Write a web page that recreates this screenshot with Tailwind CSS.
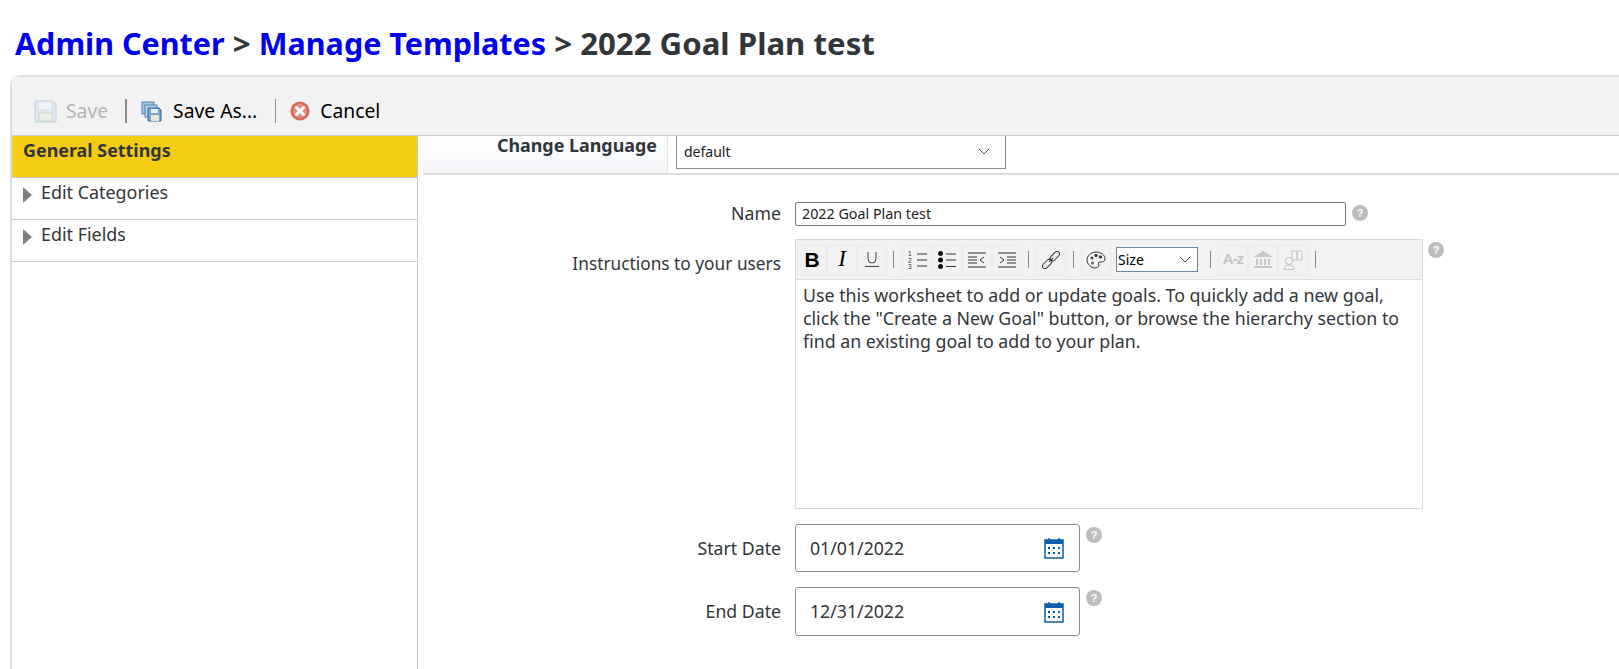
<!DOCTYPE html>
<html lang="en">
  <head>
    <meta charset="UTF-8" />
    <title>2022 Goal Plan test</title>
    <script src="https://cdn.jsdelivr.net/npm/@tailwindcss/browser@4"></script>
  </head>

  <body class="h-[669px] w-[1619px] overflow-hidden bg-white font-['Noto_Sans',sans-serif] text-[#32363a]">
    <!-- breadcrumb -->
    <h1 class="h-[75px] pl-[15px] pt-[21px] text-[31.2px] leading-[44px] font-bold whitespace-nowrap">
      <a class="text-[#0000ee] text-[30.5px]">Admin Center</a> &gt;
      <a class="text-[#0000ee] text-[30.5px]">Manage Templates</a> &gt; 2022 Goal Plan test
    </h1>

    <div class="ml-[10px] h-[594px] rounded-tl-[10px] border-t-2 border-l-2 border-[#dedede] flex flex-col">
      <!-- toolbar -->
      <div class="h-[59px] shrink-0 bg-[#f2f2f2] border-b border-[#cccccc] flex items-center pl-[22px] pt-[10px] text-[19.3px] text-black">
        <svg width="23" height="23" viewBox="0 0 23 23" class="opacity-35">
          <path d="M1 1h18l3 3v18H1z" fill="#b7cfe8" stroke="#6f97c4" />
          <rect x="5" y="2" width="12" height="7" fill="#eef4fa" />
          <rect x="5" y="13" width="13" height="8" fill="#dfe8c8" stroke="#8aa" />
        </svg>
        <span class="ml-[9px] text-[#b5b5b5]">Save</span>
        <span class="ml-[17px] h-6 w-0.5 bg-[#8c8c8c]"></span>
        <svg width="21" height="21" viewBox="0 0 21 21" class="ml-[14px]">
          <rect x="1" y="1" width="12" height="12" fill="#a9c4e4" stroke="#4f7fb5" />
          <rect x="4" y="4" width="12" height="12" fill="#bcd2ea" stroke="#4f7fb5" />
          <path d="M7 7h11l2 2v11H7z" fill="#7fa6d2" stroke="#2f659f" />
          <rect x="10" y="14" width="8" height="6" fill="#e6e6d8" />
          <rect x="10" y="8" width="7" height="4" fill="#e8f0f8" />
        </svg>
        <span class="ml-[11px]">Save As...</span>
        <span class="ml-[18px] h-6 w-px bg-[#8c8c8c]"></span>
        <svg width="20" height="20" viewBox="0 0 20 20" class="ml-[14px]">
          <circle cx="10" cy="10" r="9.5" fill="#d9695c" />
          <circle cx="10" cy="10" r="7" fill="#e58b7f" />
          <path d="M6.5 6.5l7 7M13.5 6.5l-7 7" stroke="#fff" stroke-width="3" stroke-linecap="round" />
        </svg>
        <span class="ml-[10px]">Cancel</span>
      </div>

      <div class="flex-1 flex min-h-0">
        <!-- left nav -->
        <aside class="w-[406px] shrink-0 border-r border-[#c8c8c8] text-[17.9px]">
          <div class="h-[42px] bg-[#f4cc14] border-b border-[#cccccc] pl-[11px] pt-[2px] font-bold leading-[24px]">General Settings</div>
          <div class="h-[42px] border-b border-[#cccccc] pl-[11px] pt-[2px] leading-[24px] flex gap-[9px]">
            <svg width="9" height="16" viewBox="0 0 9 16" class="mt-[7px]"><path d="M0 0l9 8-9 8z" fill="#808080" /></svg>
            Edit Categories
          </div>
          <div class="h-[42px] border-b border-[#cccccc] pl-[11px] pt-[2px] leading-[24px] flex gap-[9px]">
            <svg width="9" height="16" viewBox="0 0 9 16" class="mt-[7px]"><path d="M0 0l9 8-9 8z" fill="#808080" /></svg>
            Edit Fields
          </div>
        </aside>

        <main class="flex-1 pl-[5px] min-w-0">
          <!-- language row -->
          <div class="h-[39px] border-b-2 border-[#dcdcdc] flex">
            <div class="w-[245px] h-full pr-[10px] text-right text-[17.9px] font-bold leading-[18px] bg-gradient-to-b from-white to-[#f2f5f8] border-r border-[#e4e4e4]">Change Language</div>
            <div class="ml-[8px] w-[330px] h-[33px] bg-white border border-t-0 border-[#89919a] flex items-center justify-between pl-[7px] pr-[15px] pb-[2px] text-[14px] text-[#222]">
              default
              <svg width="12" height="7" viewBox="0 0 12 7"><path d="M1 1l5 5 5-5" fill="none" stroke="#444" /></svg>
            </div>
          </div>

          <!-- form -->
          <div class="grid grid-cols-[358px_auto] gap-x-[14px] pt-[27px] text-[17.7px] items-start">
            <label class="text-right leading-[22px]">Name</label>
            <div class="flex items-start gap-[6px]">
              <div class="w-[551px] h-[24px] border border-[#777] rounded-[2px] pl-[6px] text-[14.3px] leading-[22px] text-[#222]">2022 Goal Plan test</div>
              <svg width="16" height="16" viewBox="0 0 16 16" class="mt-[3px]"><circle cx="8" cy="8" r="8" fill="#bdbdbd" /><text x="8" y="12" text-anchor="middle" font-size="11" font-weight="700" fill="#fff" font-family="Liberation Sans">?</text></svg>
            </div>

            <label class="mt-[13px] pt-[13px] text-right leading-[24px] text-[17.3px]">Instructions to your users</label>
            <div class="mt-[13px] flex items-start gap-[5px]">
              <div class="w-[628px] h-[270px] border border-[#d9d9d9]">
                <div class="h-[40px] bg-[#f2f2f2] border-b border-[#dedede] flex items-center pl-[1px] text-[#222]">
                  <span class="size-[30px] border border-[#ebebeb] flex items-center justify-center text-[21px] font-bold font-['Liberation_Sans',sans-serif] text-black">B</span>
                  <span class="size-[30px] border border-[#ebebeb] flex items-center justify-center text-[23px] italic font-['Liberation_Serif',serif] text-black">I</span>
                  <span class="size-[30px] border border-[#ebebeb] flex items-center justify-center">
                    <svg width="16" height="18" viewBox="0 0 16 18" fill="none" stroke="#444"><path d="M4 1v7a4 4 0 0 0 8 0V1M1 15.5h14" /></svg>
                  </span>
                  <span class="ml-[6px] mr-[8px] h-[17px] w-px bg-[#888]"></span>
                  <span class="size-[30px] border border-[#ebebeb] flex items-center justify-center">
                    <svg width="19" height="20" viewBox="0 0 19 20"><path d="M9 4h10M9 10h10M9 16h10" stroke="#333" /><text x="0" y="6" font-size="6.500" fill="#333" font-family="Liberation Sans">1</text><text x="0" y="12.500" font-size="6.500" fill="#333" font-family="Liberation Sans">2</text><text x="0" y="19" font-size="6.500" fill="#333" font-family="Liberation Sans">3</text></svg>
                  </span>
                  <span class="size-[30px] border border-[#ebebeb] flex items-center justify-center">
                    <svg width="18" height="18" viewBox="0 0 18 18"><circle cx="2.5" cy="2.5" r="2.5" fill="#111" /><circle cx="2.5" cy="9" r="2.5" fill="#111" /><circle cx="2.5" cy="15.500" r="2.500" fill="#111" /><path d="M8 3h10M8 9h10M8 15.500h10" stroke="#333" /></svg>
                  </span>
                  <span class="size-[30px] border border-[#ebebeb] flex items-center justify-center">
                    <svg width="18" height="16" viewBox="0 0 18 16" fill="none" stroke="#333"><path d="M0 1h18M0 15h18M0 5h9M0 8h9M0 11h9M16 5l-4 3 4 3" /></svg>
                  </span>
                  <span class="size-[30px] border border-[#ebebeb] flex items-center justify-center">
                    <svg width="18" height="16" viewBox="0 0 18 16" fill="none" stroke="#333"><path d="M0 1h18M0 15h18M9 5h9M9 8h9M9 11h9M2 5l4 3-4 3" /></svg>
                  </span>
                  <span class="ml-[6px] mr-[7px] h-[17px] w-px bg-[#888]"></span>
                  <span class="size-[30px] border border-[#ebebeb] flex items-center justify-center">
                    <svg width="18" height="18" viewBox="0 0 18 18" fill="none" stroke="#333"><g transform="rotate(45 9 9)"><rect x="6.500" y="-2" width="5" height="11" rx="2.500" /><rect x="6.500" y="9" width="5" height="11" rx="2.500" /><path d="M9 6v6" /></g></svg>
                  </span>
                  <span class="mx-[7px] h-[17px] w-px bg-[#888]"></span>
                  <span class="size-[30px] border border-[#ebebeb] flex items-center justify-center">
                    <svg width="20" height="18" viewBox="0 0 20 18" fill="none" stroke="#333"><path d="M10 1c5 0 9 3 9 7 0 3-3 3-5 3-2 0-2 2-1 3 0 2-2 3-4 3-4 0-8-4-8-8s4-8 9-8z" /><circle cx="6" cy="7" r="1" fill="#333" /><circle cx="10" cy="4.500" r="1.200" fill="#333" /><circle cx="14.500" cy="6" r="1.200" fill="#333" /><circle cx="6.500" cy="12" r="1" /></svg>
                  </span>
                  <span class="ml-[5px] w-[82px] h-[25px] bg-white border border-[#6f87a0] flex items-center justify-between pl-[1px] pr-[6px] text-[14px] text-black">
                    Size
                    <svg width="12" height="7" viewBox="0 0 12 7"><path d="M1 1l5 5 5-5" fill="none" stroke="#444" /></svg>
                  </span>
                  <span class="mx-[12px] h-[17px] w-px bg-[#888]"></span>
                  <span class="-ml-[5px] size-[30px] border border-[#ebebeb] flex items-center justify-center text-[15px] tracking-[-1px] font-bold font-['Liberation_Sans',sans-serif] text-[#c4c4c4]">A-z</span>
                  <span class="size-[30px] border border-[#ebebeb] flex items-center justify-center">
                    <svg width="20" height="18" viewBox="0 0 20 18" fill="#c8c8c8"><path d="M10 0l10 6H0z" /><path d="M3 8h2v6H3zM7 8h2v6H7zM11 8h2v6h-2zM15 8h2v6h-2zM1 15h18v2H1z" /></svg>
                  </span>
                  <span class="size-[30px] border border-[#ebebeb] flex items-center justify-center">
                    <svg width="20" height="20" viewBox="0 0 20 20" fill="none" stroke="#c4c4c4"><circle cx="6" cy="11" r="3.500" /><path d="M1 19.500c0-6 10-6 10 0zM9 1h5v9H9zM14 1h5v9h-5z" /></svg>
                  </span>
                  <span class="ml-[7px] h-[17px] w-px bg-[#888]"></span>
                </div>
                <p class="px-[7px] pt-[4px] text-[17.8px] leading-[23px]">Use this worksheet to add or update goals. To quickly add a new goal, click the "Create a New Goal" button, or browse the hierarchy section to find an existing goal to add to your plan.</p>
              </div>
              <svg width="16" height="16" viewBox="0 0 16 16" class="mt-[3px]"><circle cx="8" cy="8" r="8" fill="#bdbdbd" /><text x="8" y="12" text-anchor="middle" font-size="11" font-weight="700" fill="#fff" font-family="Liberation Sans">?</text></svg>
            </div>

            <label class="mt-[15px] text-right leading-[48px]">Start Date</label>
            <div class="mt-[15px] flex items-start gap-[6px]">
              <div class="w-[285px] h-[48px] border border-[#89919a] rounded-[3px] flex items-center justify-between pl-[14px] pr-[15px]">
                01/01/2022
                <svg width="20" height="22" viewBox="0 0 20 22"><path d="M1 3h18v18H1z" fill="#fff" stroke="#0a5fa8" stroke-width="1.500" /><rect x="1" y="3" width="18" height="4" fill="#0a5fa8" /><path d="M5 1v3M15 1v3" stroke="#0a5fa8" stroke-width="1.500" /><path d="M4 10h2v2H4zM9 10h2v2H9zM14 10h2v2h-2zM4 15h2v2H4zM9 15h2v2H9zM14 15h2v2h-2z" fill="#0a5fa8" /></svg>
              </div>
              <svg width="16" height="16" viewBox="0 0 16 16" class="mt-[3px]"><circle cx="8" cy="8" r="8" fill="#bdbdbd" /><text x="8" y="12" text-anchor="middle" font-size="11" font-weight="700" fill="#fff" font-family="Liberation Sans">?</text></svg>
            </div>

            <label class="mt-[15px] text-right leading-[48px]">End Date</label>
            <div class="mt-[15px] flex items-start gap-[6px]">
              <div class="w-[285px] h-[49px] border border-[#89919a] rounded-[3px] flex items-center justify-between pl-[14px] pr-[15px]">
                12/31/2022
                <svg width="20" height="22" viewBox="0 0 20 22"><path d="M1 3h18v18H1z" fill="#fff" stroke="#0a5fa8" stroke-width="1.500" /><rect x="1" y="3" width="18" height="4" fill="#0a5fa8" /><path d="M5 1v3M15 1v3" stroke="#0a5fa8" stroke-width="1.500" /><path d="M4 10h2v2H4zM9 10h2v2H9zM14 10h2v2h-2zM4 15h2v2H4zM9 15h2v2H9zM14 15h2v2h-2z" fill="#0a5fa8" /></svg>
              </div>
              <svg width="16" height="16" viewBox="0 0 16 16" class="mt-[3px]"><circle cx="8" cy="8" r="8" fill="#bdbdbd" /><text x="8" y="12" text-anchor="middle" font-size="11" font-weight="700" fill="#fff" font-family="Liberation Sans">?</text></svg>
            </div>
          </div>
        </main>
      </div>
    </div>
  </body>
</html>
